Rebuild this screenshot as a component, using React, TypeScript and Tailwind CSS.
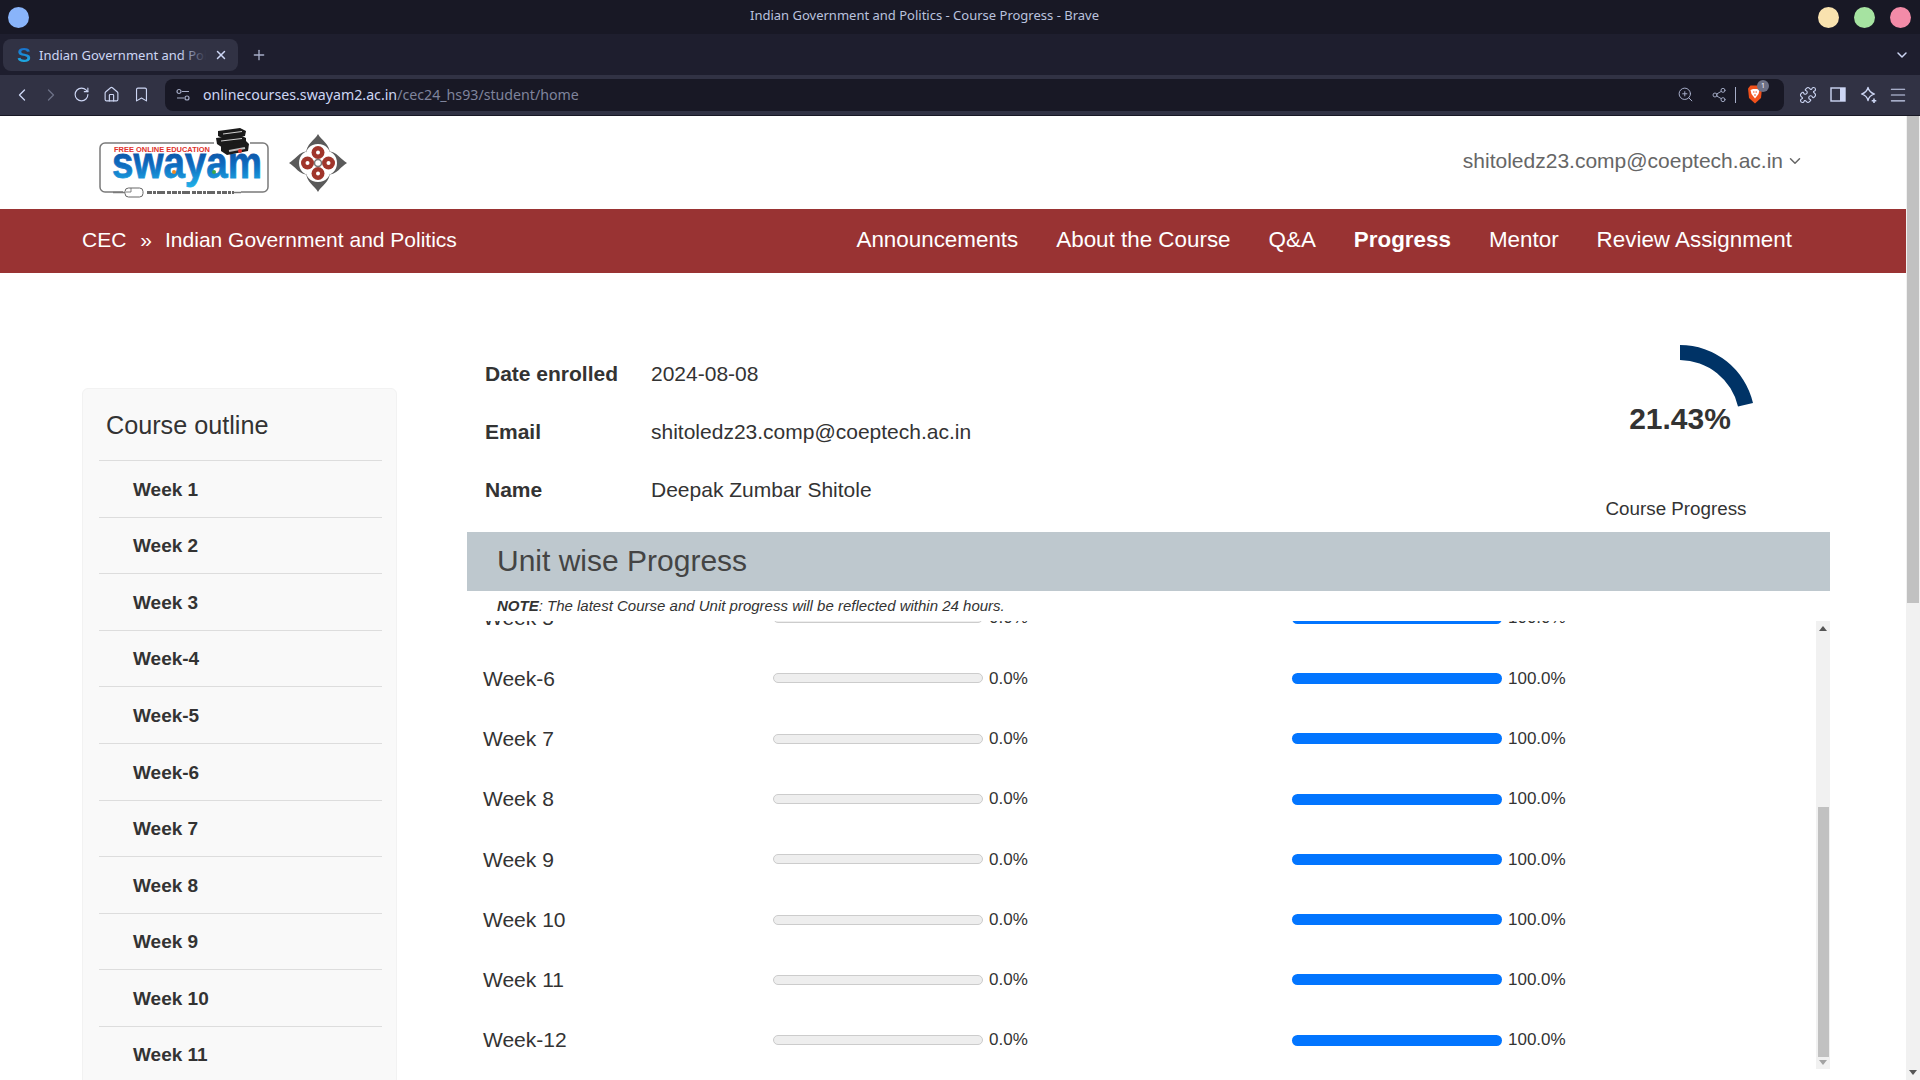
import { Bookmark, ChevronDown, ChevronLeft, ChevronRight, Home, Menu, Plus, Puzzle, RotateCw, Share2, X, ZoomIn } from "lucide-react";

const sidebarWeeks = ["Week 1", "Week 2", "Week 3", "Week-4", "Week-5", "Week-6", "Week 7", "Week 8", "Week 9", "Week 10", "Week 11"];
const unitRows = ["Week 5", "Week-6", "Week 7", "Week 8", "Week 9", "Week 10", "Week 11", "Week-12"];
const navItems = ["Announcements", "About the Course", "Q&A", "Progress", "Mentor", "Review Assignment"];

function SwayamLogo() {
  return (
    <svg width="172" height="70" viewBox="0 0 172 70" className="shrink-0">
      <defs>
        <linearGradient id="swayamBlue" x1="0" y1="0" x2="0" y2="1">
          <stop offset="0" stopColor="#0a3d8c" />
          <stop offset="0.55" stopColor="#0f6cc0" />
          <stop offset="1" stopColor="#1fb0e8" />
        </linearGradient>
      </defs>
      <rect x="1" y="15" width="168" height="49" rx="5" fill="none" stroke="#7a7a7a" strokeWidth="1.5" />
      <rect x="115" y="10" width="36" height="10" fill="#fff" />
      <rect x="24" y="60" width="118" height="10" fill="#fff" />
      <text x="15" y="24" fontFamily="Liberation Sans" fontWeight="700" fontSize="8" textLength="96" lengthAdjust="spacingAndGlyphs" fill="#e0322c">FREE ONLINE EDUCATION</text>
      <text x="13" y="50" fontFamily="Liberation Sans" fontWeight="700" fontSize="44" textLength="150" lengthAdjust="spacingAndGlyphs" stroke="url(#swayamBlue)" strokeWidth="0.8" fill="url(#swayamBlue)">swayam</text>
      <circle cx="75" cy="44" r="2" fill="#ee8a22" />
      <circle cx="115" cy="44" r="2" fill="#3aa84a" />
      <rect x="26" y="60" width="18" height="9" rx="3.5" fill="#fff" stroke="#666" />
      <path d="M32 60v4h-5" fill="none" stroke="#666" strokeWidth="0.8" />
      <path d="M14 64.500H26" stroke="#7a7a7a" strokeWidth="1.500" />
      <path d="M48 64.500H135" stroke="#666" strokeWidth="3" strokeDasharray="5 1 3 1 8 2 4 1" />
      <path d="M135 64.500H142" stroke="#7a7a7a" strokeWidth="1.500" />
      <path d="M119 3 141 0 147 3 146 8 125 11 119 8Z" fill="#1a1a1a" />
      <path d="M117 10 141 7 147 10 147 16 124 20 118 16Z" fill="#1a1a1a" />
      <path d="M122 17 147 13 150 16 149 23 128 27 122 23Z" fill="#1a1a1a" />
      <path d="M124 6 143 3.500M122 13 143 10.500" stroke="#fff" strokeWidth="0.8" />
      <path d="M130 23 146 20" stroke="#bbb" strokeWidth="2" />
      <circle cx="141" cy="23" r="2" fill="#e0322c" />
    </svg>
  );
}

function Emblem() {
  const petal = "M0-29C3-23 12-19 12-9C12-13 8-19 0-19C-8-19-12-13-12-9C-12-19-3-23 0-29Z";
  return (
    <svg width="58" height="58" viewBox="-29 -29 58 58" className="shrink-0">
      <g fill="#5a5a5a">
        <path d={petal} />
        <path d={petal} transform="rotate(90)" />
        <path d={petal} transform="rotate(180)" />
        <path d={petal} transform="rotate(270)" />
      </g>
      <g fill="#a0352b">
        <circle cx="0" cy="-10.500" r="6.500" />
        <circle cx="10.500" cy="0" r="6.500" />
        <circle cx="0" cy="10.500" r="6.500" />
        <circle cx="-10.500" cy="0" r="6.500" />
      </g>
      <g fill="#fff">
        <circle cx="0" cy="-10.500" r="2" />
        <circle cx="10.500" cy="0" r="2" />
        <circle cx="0" cy="10.500" r="2" />
        <circle cx="-10.500" cy="0" r="2" />
      </g>
      <circle r="3.500" fill="#fff" stroke="#777" strokeWidth="1.500" />
    </svg>
  );
}

function BrowserChrome() {
  return (
    <div className="shrink-0 font-['Noto_Sans',sans-serif] text-[#cdd6f4]">
      <div className="h-[34px] bg-[#181825] flex items-center px-2">
        <div className="w-[21px] h-[21px] rounded-full bg-[#89b4fa]" />
        <div className="flex-1 text-center text-[13px] text-[#bac2de] -mt-[2px] pl-[2px]">Indian Government and Politics - Course Progress - Brave</div>
        <div className="flex gap-[15px] pr-[1px]">
          <div className="w-[21px] h-[21px] rounded-full bg-[#f9e2af]" />
          <div className="w-[21px] h-[21px] rounded-full bg-[#a6e3a1]" />
          <div className="w-[21px] h-[21px] rounded-full bg-[#f38ba8]" />
        </div>
      </div>
      <div className="h-[41px] bg-[#1e1e2e] flex items-center pl-[3px] pr-[10px]">
        <div className="w-[235px] h-[32px] rounded-lg bg-[#313244] flex items-center pl-[14px] pr-[10px]">
          <span className="w-[18px] text-[21px] font-bold leading-none bg-gradient-to-b from-[#1b5fc4] to-[#22b8e8] bg-clip-text text-transparent font-['Liberation_Sans',sans-serif]">S</span>
          <div className="relative ml-[4px] w-[167px] overflow-hidden whitespace-nowrap text-[13px] text-[#cdd6f4] mt-[2px]">
            Indian Government and Pol
            <div className="absolute right-0 top-0 bottom-0 w-[26px] bg-gradient-to-r from-transparent to-[#313244]" />
          </div>
          <X size={14} strokeWidth={2.5} className="ml-[8px] text-[#cdd6f4]" />
        </div>
        <Plus size={16} className="ml-[13px] text-[#a6adc8]" />
        <ChevronDown size={16} strokeWidth={2.2} className="ml-auto text-[#cdd6f4]" />
      </div>
      <div className="h-[41px] pb-[1px] bg-[#313244] flex items-center border-b border-[#181825]">
        <div className="w-[165px] flex items-center pl-[12px] text-[#cdd6f4]">
          <ChevronLeft size={20} strokeWidth={1.6} />
          <ChevronRight size={20} strokeWidth={1.6} className="ml-[9px] text-[#6c7086]" />
          <RotateCw size={17} strokeWidth={1.6} className="ml-[12px]" />
          <Home size={17} strokeWidth={1.6} className="ml-[13px]" />
          <Bookmark size={17} strokeWidth={1.6} className="ml-[13px]" />
        </div>
        <div className="w-[1619px] h-[32px] rounded-lg bg-[#181825] flex items-center pl-[10px] pr-[14px]">
          <svg width="16" height="16" viewBox="0 0 16 16" fill="none" stroke="#a6adc8" strokeWidth="1.2">
            <circle cx="4" cy="4.500" r="2" />
            <path d="M7 4.500h7M2 11h7" />
            <circle cx="12" cy="11" r="2" />
          </svg>
          <span className="ml-[12px] text-[14.2px] text-[#cdd6f4]">onlinecourses.swayam2.ac.in<span className="text-[#7f849c]">/cec24_hs93/student/home</span></span>
          <ZoomIn size={17} strokeWidth={1.4} className="ml-auto text-[#a6adc8]" />
          <Share2 size={16} strokeWidth={1.4} className="ml-[17px] text-[#a6adc8]" />
          <div className="ml-[8px] w-px h-[16px] bg-[#a6adc8]" />
          <div className="relative ml-[11px] mr-[7px]">
            <svg width="16" height="19" viewBox="0 0 16 19" className="block">
              <path d="M3.500 0.500h9l2.500 3-1 9.500-6 5.500-6-5.500-1-9.500z" fill="#f1511b" />
              <path d="M3.500 5l2.500-1h4l2.500 1-1 4-3.500 4.500-3.500-4.500z" fill="#fff" />
              <path d="M6 7h1.500M8.500 7h1.500M7 10h2" stroke="#f1511b" strokeWidth="1" />
            </svg>
            <div className="absolute -top-[5px] left-[10px] w-[12px] h-[12px] rounded-full bg-[#6c7086] text-[7px] leading-[12px] text-center text-white">1</div>
          </div>
        </div>
        <div className="flex items-center pl-[15px] text-[#cdd6f4]">
          <Puzzle size={18} strokeWidth={1.5} />
          <svg width="18" height="16" viewBox="0 0 18 16" className="shrink-0 ml-[13px]">
            <rect x="1" y="1" width="14" height="13" fill="none" stroke="#cdd6f4" strokeWidth="1.400" />
            <rect x="10" y="1" width="5" height="13" fill="#cdd6f4" />
          </svg>
          <svg width="18" height="18" viewBox="0 0 18 18" fill="none" stroke="#cdd6f4" strokeWidth="1.300" strokeLinejoin="round" className="shrink-0 ml-[12px]">
            <path d="M8 1.500C8.800 5 10.500 6.800 14.500 8C10.500 9.200 8.800 11 8 14.500C7.200 11 5.500 9.200 1.500 8C5.500 6.800 7.200 5 8 1.500Z" />
            <path d="M14 12.500v4.500M11.700 14.700h4.600" strokeWidth="1.600" />
          </svg>
          <Menu size={20} strokeWidth={1.3} className="ml-[10px]" />
        </div>
      </div>
    </div>
  );
}

function PageHeader() {
  return (
    <>
      <div className="h-[93px] flex items-center pl-[99px] pr-[102px]">
        <SwayamLogo />
        <div className="ml-[18px] mt-[1px]"><Emblem /></div>
        <div className="ml-auto flex items-center text-[21px] text-[#666] -mt-[3px]">
          shitoledz23.comp@coeptech.ac.in
          <ChevronDown size={18} strokeWidth={2} className="ml-[3px]" />
        </div>
      </div>
      <div className="h-[64px] pb-[2px] bg-[#993333] flex items-center pl-[82px] pr-[114px] text-white text-[21px]">
        <span className="-mt-[1px]">CEC</span>
        <span className="ml-[14px] -mt-[1px]">»</span>
        <span className="ml-[13px] -mt-[1px]">Indian Government and Politics</span>
        <div className="ml-auto flex gap-[38px] text-[22.4px]">
          {navItems.map((item) => (
            <span key={item} className={item === "Progress" ? "font-bold" : ""}>{item}</span>
          ))}
        </div>
      </div>
    </>
  );
}

function Sidebar() {
  return (
    <aside className="w-[315px] shrink-0 mt-[115px] ml-[82px] h-[800px] bg-[#f9f9f9] rounded-t-md border border-[#f2f2f2] pl-[16px] pr-[14px]">
      <div className="h-[72px] pl-[7px] pt-[18px] text-[25.2px] leading-[36px] text-[#333] border-b border-[#ddd]">Course outline</div>
      {sidebarWeeks.map((week) => (
        <div key={week} className="h-[56.6px] pl-[34px] pt-[2px] flex items-center text-[19px] font-bold text-[#333] border-b border-[#ddd]">{week}</div>
      ))}
    </aside>
  );
}

function Gauge() {
  return (
    <svg width="160" height="100" viewBox="0 0 160 100" className="absolute left-[-2px] top-0">
      <path d="M80 0A75 75 0 0 1 153 58L138 61.500A60 60 0 0 0 80 15Z" fill="#003366" />
    </svg>
  );
}

function UnitProgress() {
  return (
    <div className="overflow-hidden flex-1 relative">
      <div className="-mt-[33px]">
        {unitRows.map((week) => (
          <div key={week} className="h-[60.3px] flex items-center text-[#333]">
            <div className="w-[306px] pl-[16px] text-[21px]">{week}</div>
            <div className="w-[210px] h-[10px] rounded-full bg-[#eee] border border-[#ccc]" />
            <div className="w-[309px] pl-[6px] text-[17px]">0.0%</div>
            <div className="w-[210px] h-[11px] rounded-full bg-[#0275ff]" />
            <div className="pl-[6px] text-[17px]">100.0%</div>
          </div>
        ))}
      </div>
      <div className="absolute right-0 top-0 w-[14px] h-[448px] bg-[#f1f1f1] flex flex-col items-center">
        <div className="mt-[5px] w-0 h-0 border-x-[4px] border-x-transparent border-b-[5px] border-b-[#555]" />
        <div className="mt-[176px] w-[11px] h-[250px] bg-[#c1c1c1]" />
        <div className="mt-[3px] w-0 h-0 border-x-[4px] border-x-transparent border-t-[5px] border-t-[#a3a3a3]" />
      </div>
    </div>
  );
}

function MainContent() {
  return (
    <main className="w-[1363px] ml-[70px] shrink-0 flex flex-col h-[797px]">
      <div className="h-[259px] relative pt-[85px] pl-[18px] text-[21px] text-[#333]">
        <div className="h-[58px] flex"><b className="w-[166px]">Date enrolled</b>2024-08-08</div>
        <div className="h-[58px] flex"><b className="w-[166px]">Email</b>shitoledz23.comp@coeptech.ac.in</div>
        <div className="h-[58px] flex"><b className="w-[166px]">Name</b>Deepak Zumbar Shitole</div>
        <div className="absolute left-[1135px] top-[72px] w-[160px] h-[180px]">
          <Gauge />
          <div className="absolute left-0 right-0 top-[51px] text-center text-[30px] font-bold text-[#333] -ml-[4px]">21.43%</div>
          <div className="absolute left-0 right-0 top-[150px] text-center text-[18.8px] text-[#333] -ml-[12px]">Course Progress</div>
        </div>
      </div>
      <div className="h-[59px] pb-[2px] shrink-0 bg-[#bec8ce] pl-[30px] flex items-center text-[30px] text-[#444]">Unit wise Progress</div>
      <div className="h-[30px] shrink-0 pl-[30px] flex items-center text-[15px] italic text-[#333]"><b>NOTE</b>: The latest Course and Unit progress will be reflected within 24 hours.</div>
      <UnitProgress />
    </main>
  );
}

export default function App() {
  return (
    <div className="w-[1920px] h-[1080px] overflow-hidden flex flex-col bg-white font-['Liberation_Sans',Arial,sans-serif]">
      <BrowserChrome />
      <div className="flex-1 min-h-0 flex">
        <div className="flex-1 min-w-0 overflow-hidden">
          <PageHeader />
          <div className="flex">
            <Sidebar />
            <MainContent />
          </div>
        </div>
        <div className="w-[14px] shrink-0 bg-[#f1f1f1] flex flex-col items-center">
          <div className="w-[12px] h-[487px] bg-[#c1c1c1]" />
          <div className="mt-auto mb-[5px] w-0 h-0 border-x-[4px] border-x-transparent border-t-[5px] border-t-[#555]" />
        </div>
      </div>
    </div>
  );
}
